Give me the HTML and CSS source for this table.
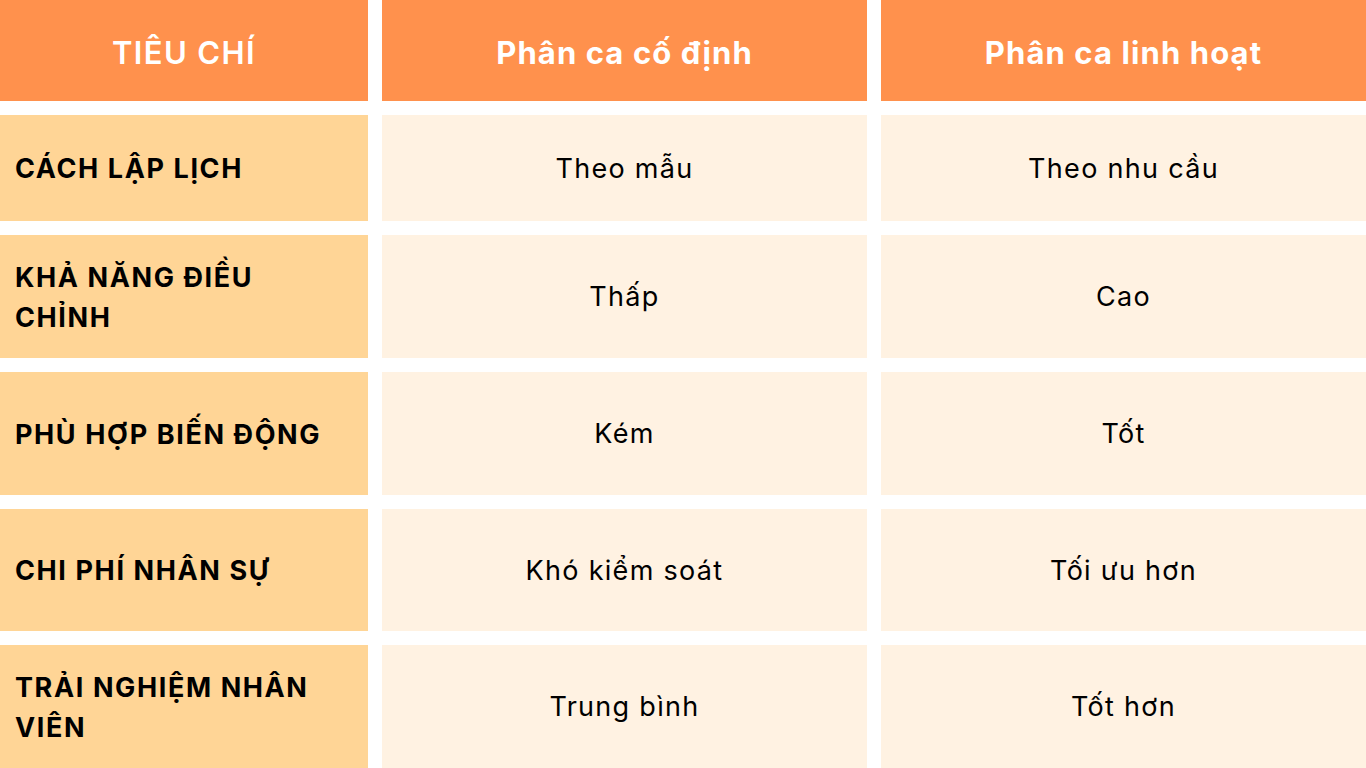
FILE: index.html
```html
<!DOCTYPE html>
<html lang="vi">
<head>
<meta charset="utf-8">
<link rel="stylesheet" href="styles.css">
</head>
<body>
<div class="table">
  <div class="cell head">TIÊU CHÍ</div>
  <div class="cell head">Phân ca cố định</div>
  <div class="cell head">Phân ca linh hoạt</div>

  <div class="cell crit">CÁCH LẬP LỊCH</div>
  <div class="cell val">Theo mẫu</div>
  <div class="cell val">Theo nhu cầu</div>

  <div class="cell crit">KHẢ NĂNG ĐIỀU CHỈNH</div>
  <div class="cell val">Thấp</div>
  <div class="cell val">Cao</div>

  <div class="cell crit">PHÙ HỢP BIẾN ĐỘNG</div>
  <div class="cell val">Kém</div>
  <div class="cell val">Tốt</div>

  <div class="cell crit">CHI PHÍ NHÂN SỰ</div>
  <div class="cell val">Khó kiểm soát</div>
  <div class="cell val">Tối ưu hơn</div>

  <div class="cell crit">TRẢI NGHIỆM NHÂN VIÊN</div>
  <div class="cell val">Trung bình</div>
  <div class="cell val">Tốt hơn</div>
</div>
</body>
</html>
```

FILE: styles.css
```css
html, body {
  margin: 0;
  padding: 0;
  background: #ffffff;
}
body {
  width: 1366px;
  height: 768px;
  overflow: hidden;
  font-family: Inter, "Open Sans", "Liberation Sans", sans-serif;
}
.table {
  display: grid;
  grid-template-columns: 368px 485px 485px;
  grid-template-rows: 101px 106px 123px 123px 122px 123px;
  gap: 14px;
}
.cell {
  display: flex;
  align-items: center;
  box-sizing: border-box;
}
.head {
  background: #ff914d;
  color: #ffffff;
  font-weight: 700;
  font-size: 31px;
  letter-spacing: 1.1px;
  justify-content: center;
  text-align: center;
  padding-top: 4px;
}
.head:first-child {
  font-weight: 600;
  letter-spacing: 1.4px;
}
.crit {
  background: #ffd596;
  color: #000000;
  font-weight: 700;
  font-size: 27px;
  letter-spacing: 1.6px;
  line-height: 40px;
  padding: 2px 30px 0 15px;
}
.val {
  background: #fff2e2;
  color: #000000;
  font-weight: 400;
  font-size: 27px;
  letter-spacing: 1.3px;
  justify-content: center;
  text-align: center;
}
```
